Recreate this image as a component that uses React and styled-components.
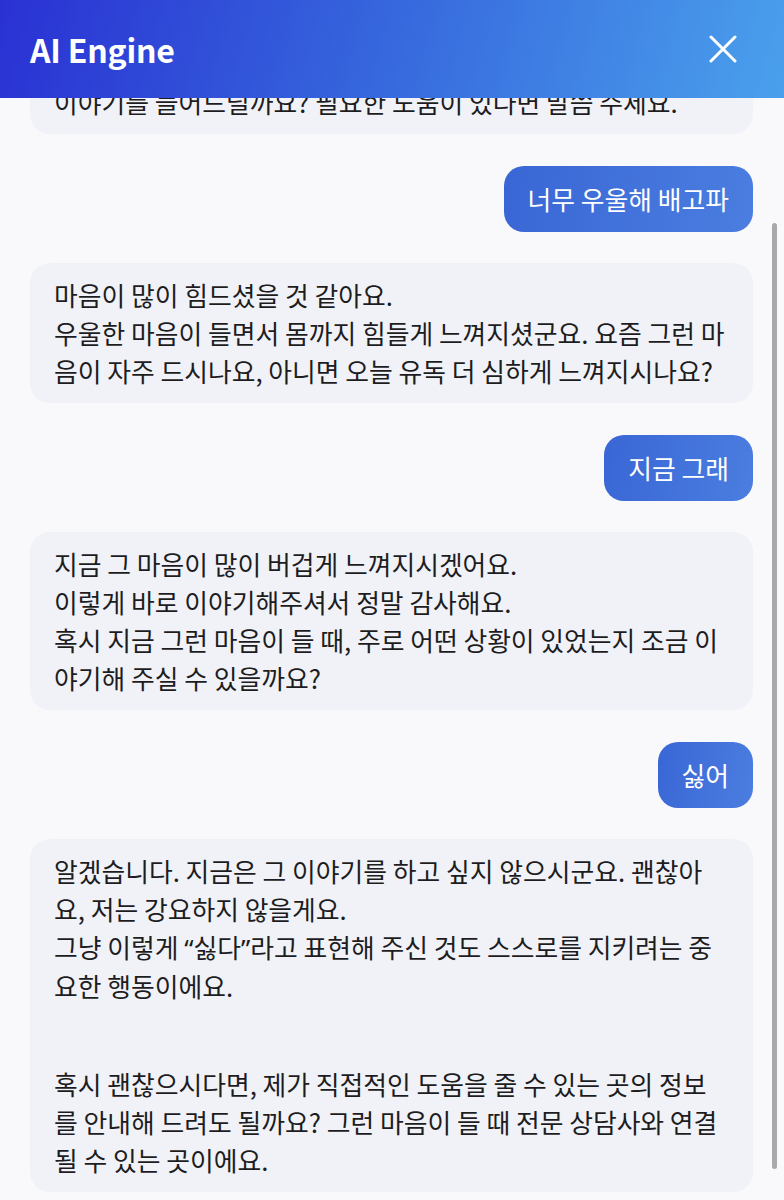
import React from 'react'
import styled, { createGlobalStyle } from 'styled-components'

const GlobalStyle = createGlobalStyle`
    html, body {
        margin: 0;
        padding: 0;
        background: #f9f9fb;
    }
    body {
        font-family: "Noto Sans CJK KR", "Noto Sans", sans-serif;
    }
`;

const Screen = styled.div`
    position: relative;
    height: 100vh;
    display: flex;
    flex-direction: column;
    background: #f9f9fb;
    overflow: hidden;
`;

const Header = styled.header`
    flex: 0 0 98px;
    display: flex;
    align-items: center;
    justify-content: space-between;
    padding: 0 47px 0 30px;
    background: linear-gradient(105deg, #2a31d3 0%, #3563dc 45%, #4aa0ec 100%);
    z-index: 2;
`;

const Title = styled.h1`
    margin: 0;
    color: #fff;
    font-size: 32px;
    line-height: 40px;
    font-weight: 700;
    letter-spacing: -0.2px;
`;

const CloseButton = styled.button`
    display: flex;
    padding: 0;
    border: none;
    background: none;
    cursor: pointer;
`;

const Messages = styled.main`
    flex: 1;
    min-height: 0;
    overflow: hidden;
    display: flex;
    flex-direction: column;
    justify-content: flex-end;
    gap: 31.5px;
    padding: 0 31px 8px 30px;
`;

const Bubble = styled.div`
    align-self: ${p => (p.mine ? 'flex-end' : 'stretch')};
    padding: ${p => (p.mine ? '14px 24px' : '13px 16px 13px 24px')};
    border-radius: 20px;
    background: ${p => (p.mine ? 'linear-gradient(100deg, #3966d5 0%, #4b7ee0 100%)' : '#f1f2f7')};
    color: ${p => (p.mine ? '#fff' : '#1d1d1f')};
    font-size: 25.8px;
    line-height: 38px;
    white-space: pre-line;
`;

const Paragraph = styled.p`
    margin: 0;

    & + & {
        margin-top: 60px;
    }
`;

// CJK font draws curly quotes full width; the chat uses narrow ones
const Quote = styled.span`
    font-family: "Noto Sans", "Liberation Sans", sans-serif;
`;

const ScrollThumb = styled.div`
    position: absolute;
    right: 7px;
    top: 223px;
    width: 5px;
    height: 946px;
    border-radius: 3px;
    background: #a9a9a9;
`;

// line breaks follow the wrapping of the chat view
const messages = [
    {
        mine: false,
        text: ['오늘 하루는 어떠셨나요?\n이야기를 들어드릴까요? 필요한 도움이 있다면 말씀 주세요.'],
    },
    { mine: true, text: ['너무 우울해 배고파'] },
    {
        mine: false,
        text: ['마음이 많이 힘드셨을 것 같아요.\n우울한 마음이 들면서 몸까지 힘들게 느껴지셨군요. 요즘 그런 마\n음이 자주 드시나요, 아니면 오늘 유독 더 심하게 느껴지시나요?'],
    },
    { mine: true, text: ['지금 그래'] },
    {
        mine: false,
        text: ['지금 그 마음이 많이 버겁게 느껴지시겠어요.\n이렇게 바로 이야기해주셔서 정말 감사해요.\n혹시 지금 그런 마음이 들 때, 주로 어떤 상황이 있었는지 조금 이\n야기해 주실 수 있을까요?'],
    },
    { mine: true, text: ['싫어'] },
    {
        mine: false,
        text: [
            <>
                {'알겠습니다. 지금은 그 이야기를 하고 싶지 않으시군요. 괜찮아\n요, 저는 강요하지 않을게요.\n그냥 이렇게 '}
                <Quote>“</Quote>싫다<Quote>”</Quote>
                {'라고 표현해 주신 것도 스스로를 지키려는 중\n요한 행동이에요.'}
            </>,
            '혹시 괜찮으시다면, 제가 직접적인 도움을 줄 수 있는 곳의 정보\n를 안내해 드려도 될까요? 그런 마음이 들 때 전문 상담사와 연결\n될 수 있는 곳이에요.',
        ],
    },
];

const CloseIcon = () => (
    <svg width="28" height="28" viewBox="0 0 28 28" fill="none">
        <path d="M2 2 L26 26 M26 2 L2 26" stroke="#fff" strokeWidth="3" strokeLinecap="round" />
    </svg>
);

const App = () => {
    return (
        <Screen>
            <GlobalStyle />
            <Header>
                <Title>AI Engine</Title>
                <CloseButton aria-label="닫기">
                    <CloseIcon />
                </CloseButton>
            </Header>
            <Messages>
                {messages.map((m, i) => (
                    <Bubble key={i} mine={m.mine}>
                        {m.text.map((t, j) => (
                            <Paragraph key={j}>{t}</Paragraph>
                        ))}
                    </Bubble>
                ))}
            </Messages>
            <ScrollThumb />
        </Screen>
    )
}

export default App
